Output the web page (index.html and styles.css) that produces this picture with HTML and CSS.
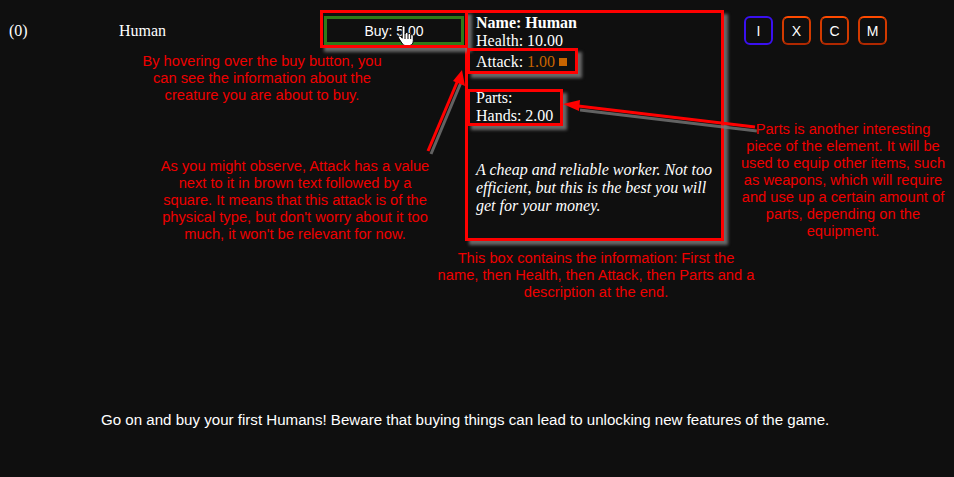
FILE: index.html
```html
<!DOCTYPE html>
<html>
<head>
<meta charset="utf-8">
<link rel="stylesheet" href="styles.css">
</head>
<body>
<div class="page">
  <div class="row">
    <div class="count">(0)</div>
    <div class="name">Human</div>
    <div class="buy-wrap">
      <button class="buy">Buy: 5.00</button>
      <svg class="cursor" width="18" height="22" viewBox="0 0 18 22">
        <path d="M5.5 1.5 C6.5 0.5 8 1 8 2.5 L8 9 L8.5 8 C9.5 7 11 7.5 11 8.7 L11.3 8.8 C12.3 8 13.7 8.6 13.7 9.8 L14 9.9 C15 9.2 16.3 9.8 16.3 11 L16.3 15.5 C16.3 18 15 20.5 12.5 20.5 L8.5 20.5 C6.8 20.5 5.8 19.5 4.8 18 L1.6 13 C1 12 1.5 11 2.6 11 C3.4 11 4 11.6 4.5 12.3 L5.2 13.2 L5.2 2.5 Z" fill="#fff" stroke="#000" stroke-width="1"/>
        <path d="M8 9 L8 14 M11 9 L11 14 M13.7 10 L13.7 14" stroke="#000" stroke-width="1"/>
      </svg>
    </div>
    <div class="tooltip">
      <div class="t-name">Name: Human</div>
      <div>Health: 10.00</div>
      <div class="t-attack">Attack: <span class="phys">1.00</span> <span class="sq"></span></div>
      <div class="t-parts">Parts:<br>Hands: 2.00</div>
      <div class="t-desc">A cheap and reliable worker. Not too efficient, but this is the best you will get for your money.</div>
    </div>
    <div class="menu">
      <button class="mbtn blue">I</button>
      <button class="mbtn">X</button>
      <button class="mbtn">C</button>
      <button class="mbtn">M</button>
    </div>
  </div>
  <p class="message">Go on and buy your first Humans! Beware that buying things can lead to unlocking new features of the game.</p>

  <div class="hl hl-buy"></div>
  <div class="hl hl-attack"></div>
  <div class="hl hl-parts"></div>

  <svg class="arrows" width="954" height="477" viewBox="0 0 954 477">
    <g stroke="#777" stroke-width="3" fill="none" opacity="0.8">
      <line x1="431" y1="154" x2="462" y2="80"/>
      <line x1="757" y1="131" x2="580" y2="110"/>
    </g>
    <g stroke="#ff0000" stroke-width="3" fill="none">
      <line x1="428" y1="151" x2="458" y2="80"/>
      <line x1="755" y1="127" x2="578" y2="106"/>
    </g>
    <polygon points="462,70 465,86 453,81" fill="#ff0000"/>
    <polygon points="563,104 580,100 579,111" fill="#ff0000"/>
  </svg>

  <div class="note n1">By hovering over the buy button, you<br>can see the information about the<br>creature you are about to buy.</div>
  <div class="note n2">As you might observe, Attack has a value<br>next to it in brown text followed by a<br>square. It means that this attack is of the<br>physical type, but don't worry about it too<br>much, it won't be relevant for now.</div>
  <div class="note n3">This box contains the information: First the<br>name, then Health, then Attack, then Parts and a<br>description at the end.</div>
  <div class="note n4">Parts is another interesting<br>piece of the element. It will be<br>used to equip other items, such<br>as weapons, which will require<br>and use up a certain amount of<br>parts, depending on the<br>equipment.</div>
</div>
</body>
</html>
```

FILE: styles.css
```css
html, body {
  margin: 0;
  padding: 0;
  background: #0f0f0f;
  width: 954px;
  height: 477px;
  overflow: hidden;
}
.page {
  position: relative;
  width: 954px;
  height: 477px;
  color: #fff;
  font-family: "Liberation Serif", "Times New Roman", serif;
  font-size: 16px;
}
.row {
  display: flex;
  align-items: center;
  padding: 16px 0 0 9px;
  height: 29px;
}
.count { width: 110px; }
.name { width: 205px; }
.buy-wrap {
  position: relative;
  width: 140px;
  height: 29px;
}
.buy {
  box-sizing: border-box;
  width: 140px;
  height: 29px;
  background: #0f0f0f;
  border: 3px solid #2f7a18;
  color: #fff;
  font-family: "Liberation Sans", Arial, sans-serif;
  font-size: 14px;
  padding: 0;
}
.cursor {
  position: absolute;
  left: 73px;
  top: 9px;
}
.tooltip {
  position: absolute;
  left: 465px;
  top: 10px;
  box-sizing: border-box;
  width: 259px;
  height: 231px;
  border: 3px solid #ff0000;
  box-shadow: 4px 4px 3px rgba(120,120,120,0.85);
  padding: 1px 6px 0 8px;
  line-height: 18px;
  background: #0f0f0f;
}
.t-name { font-weight: bold; }
.t-attack { margin-top: 3px; }
.phys { color: #c86400; }
.sq {
  display: inline-block;
  width: 8px;
  height: 8px;
  background: #c86400;
  vertical-align: 1px;
}
.t-parts { margin-top: 18px; }
.t-desc {
  margin-top: 36px;
  font-style: italic;
}
.menu {
  display: flex;
  gap: 9px;
  margin-left: 280px;
}
.mbtn {
  box-sizing: border-box;
  width: 29px;
  height: 29px;
  padding: 0;
  border-radius: 6px;
  border: 2px solid #d23a00;
  border-top-color: #ff4a00;
  border-bottom-color: #b02800;
  background: #0f0f0f;
  color: #fff;
  font-family: "Liberation Sans", Arial, sans-serif;
  font-size: 14px;
}
.mbtn.blue {
  border-color: #3a10f0;
}
.message {
  margin: 0;
  padding: 366px 0 0 101px;
  font-family: "Liberation Sans", Arial, sans-serif;
  font-size: 15.1px;
  line-height: 18px;
}
.hl {
  position: absolute;
  box-sizing: border-box;
  border: 3px solid #ff0000;
  box-shadow: 4px 4px 3px rgba(120,120,120,0.85);
}
.hl-buy { left: 320px; top: 10px; width: 148px; height: 38px; }
.hl-attack { left: 467px; top: 48px; width: 111px; height: 26px; }
.hl-parts { left: 467px; top: 89px; width: 96px; height: 37px; }
.arrows {
  position: absolute;
  left: 0;
  top: 0;
}
.note {
  position: absolute;
  color: #ee0000;
  font-family: "Liberation Sans", Arial, sans-serif;
  font-size: 14.7px;
  line-height: 17px;
  text-align: center;
  white-space: nowrap;
}
.n1 { left: 112px; top: 53px; width: 300px; }
.n2 { left: 145px; top: 158px; width: 300px; }
.n3 { left: 396px; top: 250px; width: 400px; }
.n4 { left: 693px; top: 121px; width: 300px; }
```
